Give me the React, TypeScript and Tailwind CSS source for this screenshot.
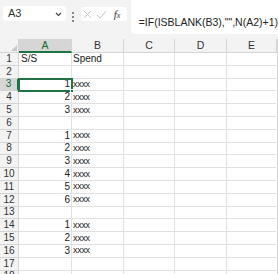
import React from 'react'

const cols = [
    { id: 'A', w: 'w-[53px]' },
    { id: 'B', w: 'w-[52px]' },
    { id: 'C', w: 'w-[51px]' },
    { id: 'D', w: 'w-[52px]' },
    { id: 'E', w: 'w-[50px]' },
]

// [A, B] values per row, 18 rows visible
const rows: [string, string][] = [
    ['S/S', 'Spend'],
    ['', ''],
    ['1', 'xxxx'],
    ['2', 'xxxx'],
    ['3', 'xxxx'],
    ['', ''],
    ['1', 'xxxx'],
    ['2', 'xxxx'],
    ['3', 'xxxx'],
    ['4', 'xxxx'],
    ['5', 'xxxx'],
    ['6', 'xxxx'],
    ['', ''],
    ['1', 'xxxx'],
    ['2', 'xxxx'],
    ['3', 'xxxx'],
    ['', ''],
    ['', ''],
]

export default function App() {
    return (
        <div className="w-[278px] h-[274px] overflow-hidden bg-[#f3f3f3] font-['Liberation_Sans',Arial,sans-serif] text-[#222]">
            {/* Formula bar */}
            <div className="flex h-[39px]">
                <div className="ml-[3px] mt-[6px] w-[63px] h-[15px] bg-white rounded-[3px] flex items-center justify-between pl-[5px] pr-[4px]">
                    <span className="text-[11px] leading-none text-[#333]">A3</span>
                    <svg width="7" height="5" viewBox="0 0 7 5" className="mt-[1px]">
                        <path d="M1 1 L3.5 3.5 L6 1" stroke="#444" strokeWidth="1.2" fill="none" />
                    </svg>
                </div>
                <div className="w-[15px] flex flex-col items-center pt-[12px] gap-[2px]">
                    <span className="w-[2px] h-[2px] bg-[#666] rounded-full" />
                    <span className="w-[2px] h-[2px] bg-[#666] rounded-full" />
                    <span className="w-[2px] h-[2px] bg-[#666] rounded-full" />
                </div>
                <div className="mt-[7px] w-[46px] h-[14px] bg-white rounded-[3px] flex items-center pl-[2px] gap-[4px]">
                    <svg width="9" height="9" viewBox="0 0 9 9">
                        <path d="M1 1 L8 8 M8 1 L1 8" stroke="#c4c4c4" strokeWidth="1" fill="none" />
                    </svg>
                    <svg width="11" height="9" viewBox="0 0 11 9">
                        <path d="M1 5 L4 8 L10 1" stroke="#c4c4c4" strokeWidth="1" fill="none" />
                    </svg>
                    <span className="ml-[3px] text-[11px] leading-none italic font-['Liberation_Serif',serif] text-[#333]">
                        f<span className="text-[8px]">x</span>
                    </span>
                </div>
                <div className="ml-[4px] flex-1 h-[34px] bg-white rounded-bl-[4px] pl-[8px] pt-[9px]">
                    <span className="text-[10.5px] leading-none text-[#222] whitespace-nowrap">=IF(ISBLANK(B3),"",N(A2)+1)</span>
                </div>
            </div>

            {/* Grid */}
            <div className="relative bg-white border-r border-[#d4d4d4] w-[278px]">
                {/* Column headers */}
                <div className="flex h-[14px] bg-[#f3f3f3]">
                    <div className="w-[19px] border-r border-b border-[#d4d4d4] flex items-end justify-end pr-[1px] pb-[1px]">
                        <svg width="6" height="6" viewBox="0 0 6 6">
                            <path d="M6 0 L6 6 L0 6 Z" fill="#c8c8c8" />
                        </svg>
                    </div>
                    {cols.map((c) =>
                        c.id === 'A' ? (
                            <div key={c.id} className={`${c.w} bg-[#d6d6d6] border-r border-[#d4d4d4] border-b-2 border-b-[#217346] flex items-center justify-center text-[10.5px] leading-none text-[#0f6b35]`}>
                                {c.id}
                            </div>
                        ) : (
                            <div key={c.id} className={`${c.w} border-r border-b border-[#d4d4d4] flex items-center justify-center text-[10.5px] leading-none text-[#333]`}>
                                {c.id}
                            </div>
                        )
                    )}
                </div>

                {/* Rows */}
                {rows.map(([a, b], i) => {
                    const selected = i === 2
                    const isText = i === 0
                    return (
                        <div key={i} className="flex h-[12.8px]">
                            <div
                                className={
                                    selected
                                        ? 'w-[19px] bg-[#d6d6d6] border-r-2 border-r-[#217346] border-b border-b-[#d4d4d4] flex items-center justify-center text-[10px] leading-none text-[#0f6b35]'
                                        : 'w-[19px] bg-[#f3f3f3] border-r border-b border-[#d4d4d4] flex items-center justify-center text-[10px] leading-none text-[#333]'
                                }
                            >
                                {i + 1}
                            </div>
                            <div className={`w-[53px] border-r border-b border-[#e1e1e1] flex items-center text-[10px] leading-none ${isText ? 'justify-start pl-[2px]' : 'justify-end pr-[1px]'}`}>
                                {a}
                            </div>
                            <div className={`w-[52px] border-r border-b border-[#e1e1e1] flex items-center pl-[1px] leading-none ${isText ? 'text-[10px]' : 'text-[9px] tracking-[-0.3px]'}`}>
                                {b}
                            </div>
                            <div className="w-[51px] border-r border-b border-[#e1e1e1]" />
                            <div className="w-[52px] border-r border-b border-[#e1e1e1]" />
                            <div className="w-[49px] border-b border-[#e1e1e1]" />
                        </div>
                    )
                })}

                {/* Active cell A3 */}
                <div className="absolute left-[18px] top-[38.6px] w-[55px] h-[14.2px] border-2 border-[#217346] pointer-events-none">
                    <div className="absolute -right-[3px] -bottom-[3px] w-[4px] h-[4px] bg-[#217346] border border-white" />
                </div>
            </div>
        </div>
    )
}
